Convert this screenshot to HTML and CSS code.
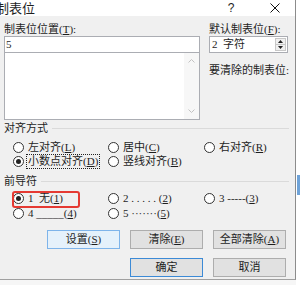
FILE: index.html
```html
<!DOCTYPE html>
<html lang="zh-CN">
<head>
    <meta charset="UTF-8">
    <meta name="viewport" content="width=device-width, initial-scale=1.0">
    <title>制表位</title>
    <link rel="stylesheet" href="styles.css">
</head>
<body>
    <div class="screen">
        <div class="dialog">
            <div class="titlebar">
                <span class="title">制表位</span>
                <span class="help">?</span>
                <span class="close">
                    <svg width="10" height="10" viewBox="0 0 10 10"><path d="M0.5 0.5L9.5 9.5M9.5 0.5L0.5 9.5" stroke="#111" stroke-width="1"/></svg>
                </span>
            </div>

            <div class="body">
                <div class="top">
                    <div class="left-col">
                        <div class="label">制表位位置(<u>T</u>):</div>
                        <div class="pos-input">5</div>
                        <div class="pos-list">
                            <div class="scrollbar">
                                <svg width="7" height="4" viewBox="0 0 7 4"><path d="M0.5 3.5L3.5 0.5L6.5 3.5" fill="none" stroke="#c2c2c2"/></svg>
                                <svg width="7" height="4" viewBox="0 0 7 4"><path d="M0.5 0.5L3.5 3.5L6.5 0.5" fill="none" stroke="#c2c2c2"/></svg>
                            </div>
                        </div>
                    </div>
                    <div class="right-col">
                        <div class="label">默认制表位(<u>F</u>):</div>
                        <div class="spin">
                            <span class="spin-value">2&nbsp;&nbsp;字符</span>
                            <span class="spin-btns">
                                <span class="spin-btn"><svg width="5" height="3" viewBox="0 0 5 3"><path d="M0 3L2.5 0L5 3Z" fill="#222"/></svg></span>
                                <span class="spin-btn"><svg width="5" height="3" viewBox="0 0 5 3"><path d="M0 0L2.5 3L5 0Z" fill="#222"/></svg></span>
                            </span>
                        </div>
                        <div class="label clear-label">要清除的制表位:</div>
                    </div>
                </div>

                <div class="group-head"><span>对齐方式</span><span class="rule"></span></div>
                <div class="options">
                    <div class="opt"><span class="radio"></span>左对齐(<u>L</u>)</div>
                    <div class="opt"><span class="radio"></span>居中(<u>C</u>)</div>
                    <div class="opt"><span class="radio"></span>右对齐(<u>R</u>)</div>
                    <div class="opt"><span class="radio checked"></span><span class="focus">小数点对齐(<u>D</u>)</span></div>
                    <div class="opt"><span class="radio"></span>竖线对齐(<u>B</u>)</div>
                </div>

                <div class="group-head lead-head"><span>前导符</span><span class="rule"></span></div>
                <div class="options leaders">
                    <div class="opt marked"><span class="radio checked"></span>1&nbsp;&nbsp;无(<u>1</u>)</div>
                    <div class="opt"><span class="radio"></span>2 . . . . . (<u>2</u>)</div>
                    <div class="opt"><span class="radio"></span>3 -----(<u>3</u>)</div>
                    <div class="opt"><span class="radio"></span>4 _____(<u>4</u>)</div>
                    <div class="opt"><span class="radio"></span>5 ·······(<u>5</u>)</div>
                </div>

                <div class="btn-row">
                    <div class="btn btn-focus">设置(<u>S</u>)</div>
                    <div class="btn">清除(<u>E</u>)</div>
                    <div class="btn">全部清除(<u>A</u>)</div>
                </div>
                <div class="btn-row btn-row-2">
                    <div class="btn btn-default">确定</div>
                    <div class="btn">取消</div>
                </div>
            </div>
        </div>
        <div class="side">
            <div class="side-blue"></div>
        </div>
    </div>
</body>
</html>
```

FILE: styles.css
```css
body {
    margin: 0;
    width: 300px;
    height: 285px;
    overflow: hidden;
    background-color: #f6f6f6;
    font-family: "Liberation Serif", "Noto Sans CJK SC", serif;
    font-size: 11px;
    color: #1e1e1e;
}

u {
    text-decoration: underline;
    text-underline-offset: 1px;
}

.screen {
    display: flex;
    height: 285px;
}

.dialog {
    width: 295px;
    height: 279px;
    background-color: #f0f0f0;
    border-right: 1px solid #8c8c8c;
    border-bottom: 1px solid #a0a0a0;
    flex-shrink: 0;
}

.side {
    flex: 1;
    background-color: #ffffff;
    padding-top: 175px;
}

.side-blue {
    height: 20px;
    margin-left: 1px;
    background-color: #6fa3d8;
}

/* title bar */
.titlebar {
    height: 16px;
    background-color: #fff;
    display: flex;
    align-items: center;
}

.title {
    font-family: "Noto Sans CJK SC", sans-serif;
    font-size: 13px;
    margin-left: -4px;
    line-height: 16px;
}

.help {
    margin-left: auto;
    width: 14px;
    text-align: center;
    font-family: "Liberation Sans", sans-serif;
    font-size: 12px;
    margin-right: 32px;
}

.close {
    width: 10px;
    height: 10px;
    display: flex;
    margin-right: 15px;
}

.body {
    padding: 0 4px;
}

/* top inputs */
.top {
    display: flex;
}

.left-col {
    width: 196px;
}

.right-col {
    width: 79px;
    margin-left: 9px;
}

.label {
    height: 14px;
    line-height: 14px;
    margin-top: 6px;
    white-space: nowrap;
}

.pos-input {
    height: 17px;
    box-sizing: border-box;
    border: 1px solid #abadb3;
    background-color: #fff;
    line-height: 15px;
    padding-left: 1px;
}

.pos-list {
    height: 67px;
    box-sizing: border-box;
    border: 1px solid #abadb3;
    border-top: none;
    background-color: #fff;
    display: flex;
    justify-content: flex-end;
}

.scrollbar {
    width: 15px;
    background-color: #f7f7f7;
    display: flex;
    flex-direction: column;
    align-items: center;
    justify-content: space-between;
    padding: 6px 0 6px;
}

.spin {
    height: 17px;
    box-sizing: border-box;
    border: 1px solid #abadb3;
    background-color: #fff;
    display: flex;
    align-items: center;
    padding-right: 1px;
}

.spin-value {
    flex: 1;
    padding-left: 2px;
    line-height: 15px;
}

.spin-btns {
    width: 11px;
    height: 13px;
    display: flex;
    flex-direction: column;
    border: 1px solid #c8c8c8;
    box-sizing: border-box;
    background-color: #f0f0f0;
}

.spin-btn {
    flex: 1;
    display: flex;
    align-items: center;
    justify-content: center;
}

.spin-btn + .spin-btn {
    border-top: 1px solid #c8c8c8;
}

.clear-label {
    margin-top: 10px;
}

/* option groups */
.group-head {
    height: 14px;
    line-height: 14px;
    margin-top: 1px;
    display: flex;
    align-items: center;
    padding-right: 2px;
}

.rule {
    flex: 1;
    height: 1px;
    background-color: #dadada;
    margin-left: 4px;
}

.lead-head {
    margin-top: 6px;
}

.options {
    display: grid;
    grid-template-columns: 95px 96px 1fr;
    grid-auto-rows: 14px;
    padding-left: 9px;
    margin-top: 5px;
}

.leaders {
    margin-top: 3px;
    grid-auto-rows: 15px;
}

.opt {
    display: flex;
    align-items: center;
    white-space: nowrap;
    line-height: 13px;
}

.radio {
    width: 11px;
    height: 11px;
    box-sizing: border-box;
    border: 1px solid #333;
    border-radius: 50%;
    background-color: #fff;
    margin-right: 4px;
    display: flex;
    align-items: center;
    justify-content: center;
    flex-shrink: 0;
}

.radio.checked::after {
    content: "";
    width: 5px;
    height: 5px;
    border-radius: 50%;
    background-color: #222;
}

.focus {
    outline: 1px dotted #222;
    outline-offset: 0;
    margin-left: -1px;
    padding: 0 1px;
}

.marked {
    position: relative;
}

.marked::before {
    content: "";
    position: absolute;
    left: -1px;
    top: 0;
    width: 64px;
    height: 13px;
    border: 2px solid #e53a33;
    border-radius: 3px;
}

/* buttons */
.btn-row {
    display: flex;
    justify-content: flex-end;
    gap: 10px;
    padding-right: 5px;
    margin-top: 9px;
}

.btn-row-2 {
    margin-top: 9px;
}

.btn {
    width: 73px;
    height: 19px;
    box-sizing: border-box;
    border: 1px solid #adadad;
    background-color: #e1e1e1;
    text-align: center;
    line-height: 17px;
    white-space: nowrap;
}

.btn-focus {
    background-color: #e5f1fb;
    border-color: #7eb4ea;
}

.btn-default {
    border-color: #3c8ad6;
}
```
